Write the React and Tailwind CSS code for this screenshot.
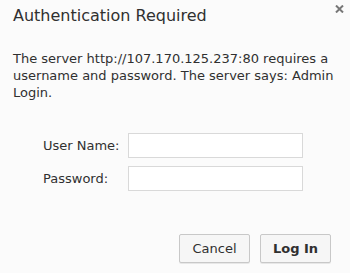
export default function App() {
  return (
    <div className="h-[273px] w-[350px] overflow-hidden bg-[#fbfbfb] font-['DejaVu_Sans',sans-serif] text-[#303030]">
      <div className="relative px-[13px] pt-[6px]">
        <h1 className="text-[16px] leading-[20px]">Authentication Required</h1>
        <button type="button" className="absolute right-[6px] top-[5px] text-[#777]">
          <svg width="9" height="8" viewBox="0 0 9 8">
            <path d="M1 0.5 L8 7.5 M8 0.5 L1 7.5" stroke="currentColor" strokeWidth="2" />
          </svg>
        </button>
        <p className="mt-[24px] text-[13px] leading-[17px]">
          The server http://107.170.125.237:80 requires a username and password. The server says: Admin Login.
        </p>
      </div>
      <div className="mt-[32px] flex flex-col gap-[8px] pl-[43px]">
        <div className="flex items-center">
          <label className="w-[85px] text-[13px]">User Name:</label>
          <input className="h-[25px] w-[175px] border border-[#d9d9d9] bg-white outline-none" />
        </div>
        <div className="flex items-center">
          <label className="w-[85px] text-[13px]">Password:</label>
          <input type="password" className="h-[25px] w-[175px] border border-[#d9d9d9] bg-white outline-none" />
        </div>
      </div>
      <div className="mt-[43px] flex justify-end gap-[10px] pr-[19px]">
        <button type="button" className="h-[29px] w-[71px] rounded-[2px] border border-[#c8c8c8] bg-[#f6f6f6] text-[13px] shadow-[0_1px_0_rgba(0,0,0,0.08)]">
          Cancel
        </button>
        <button type="button" className="h-[29px] w-[71px] rounded-[2px] border border-[#c8c8c8] bg-[#f6f6f6] text-[13px] font-bold shadow-[0_1px_0_rgba(0,0,0,0.08)]">
          Log In
        </button>
      </div>
    </div>
  )
}
